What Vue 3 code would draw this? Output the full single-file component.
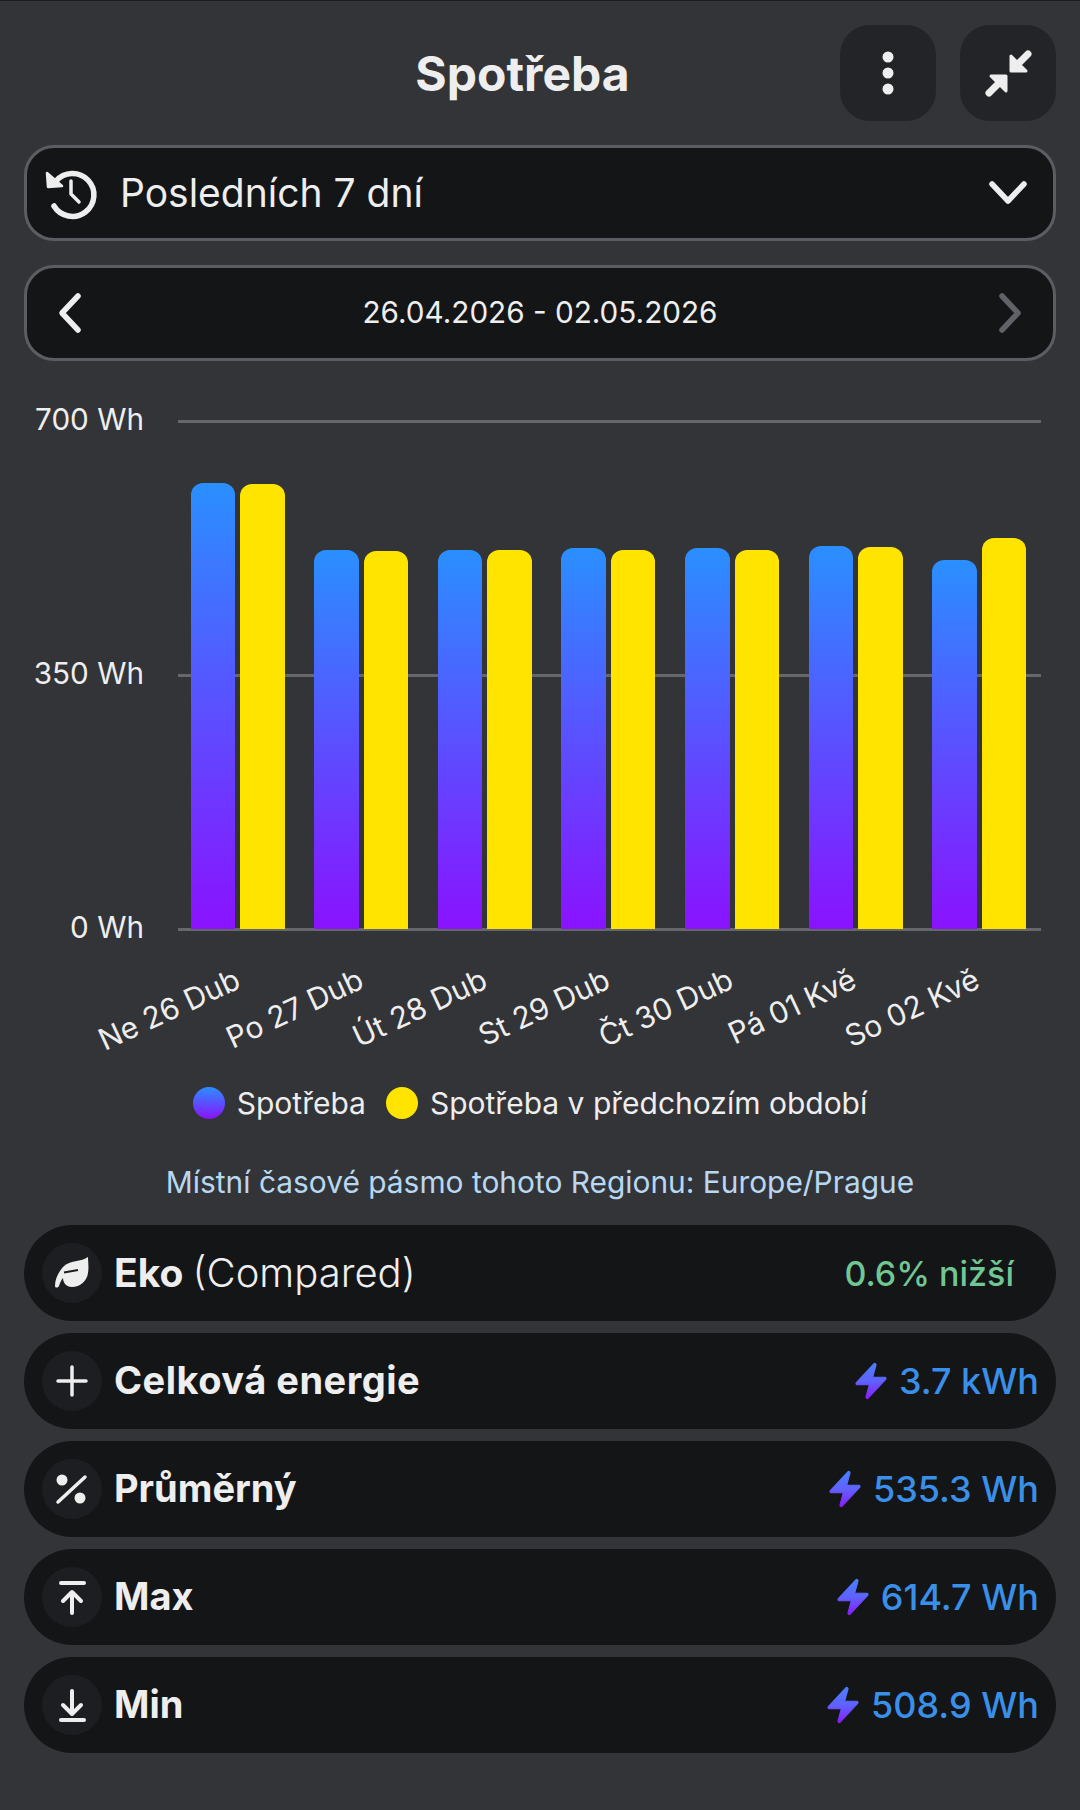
<template>
  <div class="page">
    <header class="head">
      <h1 class="title">Spotřeba</h1>
      <button class="square">
        <svg width="64" height="64" viewBox="0 0 64 64" fill="#eeeeee">
          <circle cx="32" cy="16" r="5.5" />
          <circle cx="32" cy="32" r="5.5" />
          <circle cx="32" cy="48" r="5.5" />
        </svg>
      </button>
      <button class="square">
        <svg width="64" height="64" viewBox="0 0 64 64" fill="#eeeeee" stroke="#eeeeee" stroke-linejoin="round" stroke-linecap="round">
          <path d="M35 15 L35 30 L50 30 Z" stroke-width="3" />
          <path d="M41 24 L52 13" stroke-width="7" fill="none" />
          <path d="M30 35 L15 35 L30 50 Z" stroke-width="3" />
          <path d="M24 41 L13 52" stroke-width="7" fill="none" />
        </svg>
      </button>
    </header>

    <div class="box select">
      <svg class="history" width="56" height="56" viewBox="0 0 56 56" fill="none" stroke="#eeeeee" stroke-width="5.5" stroke-linecap="round" stroke-linejoin="round">
        <path d="M13 16 A21.5 21.5 0 1 1 11 41" />
        <path d="M4 8 L5 22 L19 21 Z" fill="#eeeeee" stroke-width="2.5" />
        <path d="M28 16 L28 29 L36 37" stroke-width="3.5" />
      </svg>
      <span class="range">Posledních 7 dní</span>
      <svg width="40" height="40" viewBox="0 0 40 40" fill="none" stroke="#eeeeee" stroke-width="5.5" stroke-linecap="round" stroke-linejoin="round">
        <path d="M4 11 L20 28 L36 11" />
      </svg>
    </div>

    <div class="box dates">
      <svg width="40" height="48" viewBox="0 0 40 48" fill="none" stroke="#eeeeee" stroke-width="5.5" stroke-linecap="round" stroke-linejoin="round">
        <path d="M28 7 L12 24 L28 41" />
      </svg>
      <span class="period">26.04.2026 - 02.05.2026</span>
      <svg width="40" height="48" viewBox="0 0 40 48" fill="none" stroke="#606267" stroke-width="5.5" stroke-linecap="round" stroke-linejoin="round">
        <path d="M12 7 L28 24 L12 41" />
      </svg>
    </div>

    <section class="chart">
      <div class="y-axis">
        <span>700 Wh</span>
        <span>350 Wh</span>
        <span>0 Wh</span>
      </div>
      <div class="plot">
        <i class="line"></i>
        <i class="line"></i>
        <i class="line"></i>
        <div class="bars">
          <div v-for="d in days" :key="d.label" class="day">
            <div class="bar now" :style="{ height: d.now + 'px' }"></div>
            <div class="bar prev" :style="{ height: d.prev + 'px' }"></div>
          </div>
        </div>
      </div>
      <div class="x-axis">
        <div v-for="d in days" :key="d.label" class="tick">
          <span class="tick-label">{{ d.label }}</span>
        </div>
      </div>
    </section>

    <div class="legend">
      <i class="dot now"></i><span class="legend-text">Spotřeba</span>
      <i class="dot prev"></i><span>Spotřeba v předchozím období</span>
    </div>

    <p class="zone">Místní časové pásmo tohoto Regionu: Europe/Prague</p>

    <div class="stats">
      <div class="stat">
        <span class="badge">
          <svg width="60" height="60" viewBox="0 0 60 60" fill="#eeeeee">
            <path d="M46 14 C40 19 27 17 21 24 C16 30 13 36 13 43 C13 45 16 45 17 43 C18 40 19 37 21 35 C21 38 23 44 30 44 C38 44 45 38 46 30 C47 24 46 18 46 14 Z" />
            <path d="M22 29.5 L36 27" stroke="#1d1e21" stroke-width="2" fill="none" />
          </svg>
        </span>
        <span class="name eko">Eko <em>(Compared)</em></span>
        <span class="eco">0.6% nižší</span>
      </div>
      <div v-for="s in stats" :key="s.name" class="stat">
        <span class="badge">
          <svg width="60" height="60" viewBox="0 0 60 60" fill="none" stroke="#eeeeee" stroke-linecap="round" stroke-linejoin="round" stroke-width="3.5">
            <template v-if="s.icon === 'plus'">
              <path d="M30 16 V44 M16 30 H44" />
            </template>
            <template v-else-if="s.icon === 'percent'">
              <circle cx="20" cy="21" r="5.5" fill="#eeeeee" stroke="none" />
              <circle cx="38" cy="39" r="5.5" fill="#eeeeee" stroke="none" />
              <path d="M16 43 L43 18" />
            </template>
            <template v-else-if="s.icon === 'max'">
              <path d="M19 16 H42" stroke-width="4" />
              <path d="M30 46 V26 M21 34 L30 25 L39 34" stroke-width="4" />
            </template>
            <template v-else>
              <path d="M30 16 V38 M21 30 L30 39 L39 30" stroke-width="4" />
              <path d="M19 45 H42" stroke-width="4" />
            </template>
          </svg>
        </span>
        <span class="name" :class="{ wide: s.icon === 'plus' }">{{ s.name }}</span>
        <span class="amount">
          <svg width="40" height="40" viewBox="0 0 24 24">
            <defs>
              <linearGradient :id="'bolt-' + s.icon" x1="0" y1="0" x2="0" y2="1">
                <stop offset="0" stop-color="#4a80ff" />
                <stop offset="0.5" stop-color="#5f62ff" />
                <stop offset="1" stop-color="#8a1cff" />
              </linearGradient>
            </defs>
            <path :fill="'url(#bolt-' + s.icon + ')'" :stroke="'url(#bolt-' + s.icon + ')'" stroke-width="0.7" stroke-linejoin="round" d="M14.615 1.595a.75.75 0 0 1 .359.852L12.982 9.75h7.268a.75.75 0 0 1 .548 1.262l-10.5 11.25a.75.75 0 0 1-1.272-.71l1.992-7.302H3.75a.75.75 0 0 1-.548-1.262l10.5-11.25a.75.75 0 0 1 .913-.143Z" />
          </svg>
          {{ s.value }}
        </span>
      </div>
    </div>
  </div>
</template>

<script setup>
// bar heights are in px, 508px = 700 Wh
const days = [
  { label: 'Ne 26 Dub', now: 446, prev: 445 },
  { label: 'Po 27 Dub', now: 379, prev: 378 },
  { label: 'Út 28 Dub', now: 379, prev: 379 },
  { label: 'St 29 Dub', now: 381, prev: 379 },
  { label: 'Čt 30 Dub', now: 381, prev: 379 },
  { label: 'Pá 01 Kvě', now: 383, prev: 382 },
  { label: 'So 02 Kvě', now: 369, prev: 391 }
]

const stats = [
  { icon: 'plus', name: 'Celková energie', value: '3.7 kWh' },
  { icon: 'percent', name: 'Průměrný', value: '535.3 Wh' },
  { icon: 'max', name: 'Max', value: '614.7 Wh' },
  { icon: 'min', name: 'Min', value: '508.9 Wh' }
]
</script>

<style>
html, body {
  margin: 0;
  background: #333438;
}
</style>

<style scoped>
.page {
  width: 1080px;
  height: 1810px;
  box-sizing: border-box;
  padding: 24px 24px 0;
  background: #333438;
  border-top: 1px solid #1b1d22;
  color: #eeeeee;
  font-family: Inter, "Noto Sans", sans-serif;
  overflow: hidden;
}
.head {
  display: flex;
  align-items: center;
  gap: 24px;
  height: 96px;
}
.title {
  flex: 1;
  margin: 0;
  padding-left: 205px;
  text-align: center;
  font-size: 48px;
  font-weight: 700;
}
.square {
  display: flex;
  align-items: center;
  justify-content: center;
  width: 96px;
  height: 96px;
  padding: 0;
  border: 0;
  border-radius: 30px;
  background: #232427;
}
.box {
  display: flex;
  align-items: center;
  box-sizing: border-box;
  height: 96px;
  border: 3px solid #5c5d62;
  border-radius: 30px;
  background: #141517;
}
.select {
  margin-top: 24px;
  padding: 0 25px 0 16px;
}
.history {
  flex: none;
}
.range {
  flex: 1;
  margin: 0 0 2px 21px;
  font-size: 39px;
}
.dates {
  margin-top: 24px;
  padding: 0 23px;
  justify-content: space-between;
}
.period {
  margin-bottom: 2px;
  font-size: 29.7px;
}
.chart {
  display: grid;
  grid-template-columns: 154px 863px;
  margin-top: 59px;
}
.y-axis {
  display: flex;
  flex-direction: column;
  justify-content: space-between;
  height: 544px;
  margin-top: -19px;
  padding-right: 34px;
  box-sizing: border-box;
  width: 154px;
  text-align: right;
  font-size: 29.7px;
  line-height: 36px;
}
.y-axis span {
  margin-left: -35px;
}
.plot {
  position: relative;
  display: flex;
  flex-direction: column;
  justify-content: space-between;
  height: 511px;
}
.line {
  display: block;
  height: 3px;
  background: #66676c;
}
.bars {
  position: absolute;
  left: -2px;
  right: 0;
  bottom: 2px;
  display: grid;
  grid-template-columns: repeat(7, minmax(0, 1fr));
  align-items: end;
}
.day {
  display: flex;
  justify-content: center;
  align-items: flex-end;
  gap: 5px;
}
.bar {
  width: 44.5px;
  border-radius: 12px 12px 0 0;
}
.now {
  background: linear-gradient(#2a8fff, #8a12ff);
}
.prev {
  background: #ffe400;
}
.x-axis {
  grid-column: 2;
  display: grid;
  grid-template-columns: repeat(7, minmax(0, 1fr));
  height: 92px;
  margin-top: 14px;
}
.tick {
  display: flex;
  justify-content: flex-end;
  box-sizing: border-box;
  width: 50%;
  min-width: 0;
  padding-right: 2px;
}
.tick-label {
  flex: none;
  height: 36px;
  font-size: 30px;
  line-height: 36px;
  white-space: nowrap;
  transform-origin: right center;
  transform: rotate(-25deg);
}
.legend {
  display: flex;
  align-items: center;
  justify-content: center;
  height: 36px;
  margin-top: 34px;
  padding-right: 20px;
  font-size: 30px;
}
.dot {
  width: 32px;
  height: 32px;
  margin-right: 12px;
  border-radius: 50%;
}
.legend-text {
  margin-right: 20px;
}
.zone {
  margin: 43px 0 0;
  height: 36px;
  text-align: center;
  color: #b8d8f2;
  font-size: 29.9px;
  line-height: 36px;
}
.stats {
  display: flex;
  flex-direction: column;
  gap: 12px;
  margin-top: 25px;
}
.stat {
  display: flex;
  align-items: center;
  height: 96px;
  padding: 0 17px 0 18px;
  border-radius: 48px;
  background: #141517;
}
.badge {
  display: flex;
  align-items: center;
  justify-content: center;
  width: 60px;
  height: 60px;
  border-radius: 50%;
  background: #1d1e21;
}
.name {
  flex: 1;
  margin: 0 0 2px 12px;
  font-size: 38px;
  font-weight: 700;
}
.name.wide {
  letter-spacing: 0.5px;
}
.name.eko {
  font-size: 39px;
}
.name em {
  font-style: normal;
  font-weight: 300;
  font-size: 40px;
}
.eco {
  margin-right: 25px;
  font-size: 34px;
  font-weight: 500;
  color: #70c794;
}
.amount {
  display: flex;
  align-items: center;
  gap: 8px;
  font-size: 36px;
  font-weight: 500;
  color: #3a8fe8;
}
</style>
